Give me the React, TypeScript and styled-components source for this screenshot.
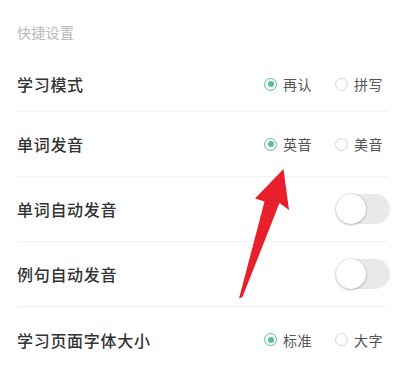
import styled, { createGlobalStyle } from 'styled-components'

const GlobalStyle = createGlobalStyle`
    html, body {
        margin: 0;
        padding: 0;
        background: #ffffff;
    }
    body {
        font-family: "Noto Sans CJK SC", "Noto Sans", sans-serif;
    }
`

const Page = styled.div`
    position: relative;
    width: 400px;
    height: 365px;
    overflow: hidden;
    background: #ffffff;
`

const SectionTitle = styled.div`
    padding: 22px 0 5px 17px;
    font-size: 14px;
    line-height: 20px;
    color: #b8b8b8;
    letter-spacing: 0.3px;
`

const Row = styled.div<{ $first?: boolean }>`
    display: flex;
    align-items: center;
    justify-content: space-between;
    box-sizing: border-box;
    height: 65px;
    padding-top: ${props => props.$first ? '10px' : '0'};
    margin: 0 12px 0 17px;
    border-bottom: 1px solid #f1f1f1;

    &:last-child {
        border-bottom: none;
    }
`

const Label = styled.span`
    font-size: 16px;
    font-weight: 500;
    color: #333333;
    letter-spacing: 0.7px;
`

const Options = styled.div`
    display: flex;
    align-items: center;
    gap: 23px;
    margin-right: 5px;
`

const Option = styled.div`
    display: flex;
    align-items: center;
    gap: 6px;
    font-size: 14px;
    color: #555555;
    letter-spacing: 0.5px;
`

const Radio = styled.span<{ $checked?: boolean }>`
    box-sizing: border-box;
    width: 13px;
    height: 13px;
    border-radius: 50%;
    border: ${props => props.$checked ? '1.6px solid #55c095' : '1.3px solid #d4d4d4'};
    display: flex;
    align-items: center;
    justify-content: center;

    &::after {
        content: '';
        display: ${props => props.$checked ? 'block' : 'none'};
        width: 6px;
        height: 6px;
        border-radius: 50%;
        background: #55c095;
    }
`

const Toggle = styled.div`
    position: relative;
    width: 54px;
    height: 30px;
    margin-right: -2px;
    border-radius: 15px;
    background: #e9e9e9;
`

const Knob = styled.span`
    position: absolute;
    left: 0;
    top: 0;
    width: 30px;
    height: 30px;
    border-radius: 50%;
    background: #ffffff;
    box-shadow: 0 0 0 1px rgba(0, 0, 0, 0.06), 0 1px 3px rgba(0, 0, 0, 0.22);
`

const Arrow = styled.svg`
    position: absolute;
    left: 0;
    top: 0;
    pointer-events: none;
`

interface ChoiceProps {
    options: string[],
    selected: number
}

const Choice = ({ options, selected }: ChoiceProps) => (
    <Options>
        {options.map((option, index) => (
            <Option key={option}>
                <Radio $checked={index === selected} />
                <span>{option}</span>
            </Option>
        ))}
    </Options>
)

const App = () => {
    return (
        <>
            <GlobalStyle />
            <Page>
                <SectionTitle>快捷设置</SectionTitle>
                <div>
                    <Row $first>
                        <Label>学习模式</Label>
                        <Choice options={['再认', '拼写']} selected={0} />
                    </Row>
                    <Row>
                        <Label>单词发音</Label>
                        <Choice options={['英音', '美音']} selected={0} />
                    </Row>
                    <Row>
                        <Label>单词自动发音</Label>
                        <Toggle><Knob /></Toggle>
                    </Row>
                    <Row>
                        <Label>例句自动发音</Label>
                        <Toggle><Knob /></Toggle>
                    </Row>
                    <Row>
                        <Label>学习页面字体大小</Label>
                        <Choice options={['标准', '大字']} selected={0} />
                    </Row>
                </div>
                {/* red annotation arrow pointing at the 英音 option */}
                <Arrow width="400" height="365" viewBox="0 0 400 365">
                    <polygon
                        points="283.5,169 289,210 279.5,203 242.5,297 239,298.5 264.5,201.5 255,198.5"
                        fill="#e8202b"
                    />
                </Arrow>
            </Page>
        </>
    )
}

export default App
